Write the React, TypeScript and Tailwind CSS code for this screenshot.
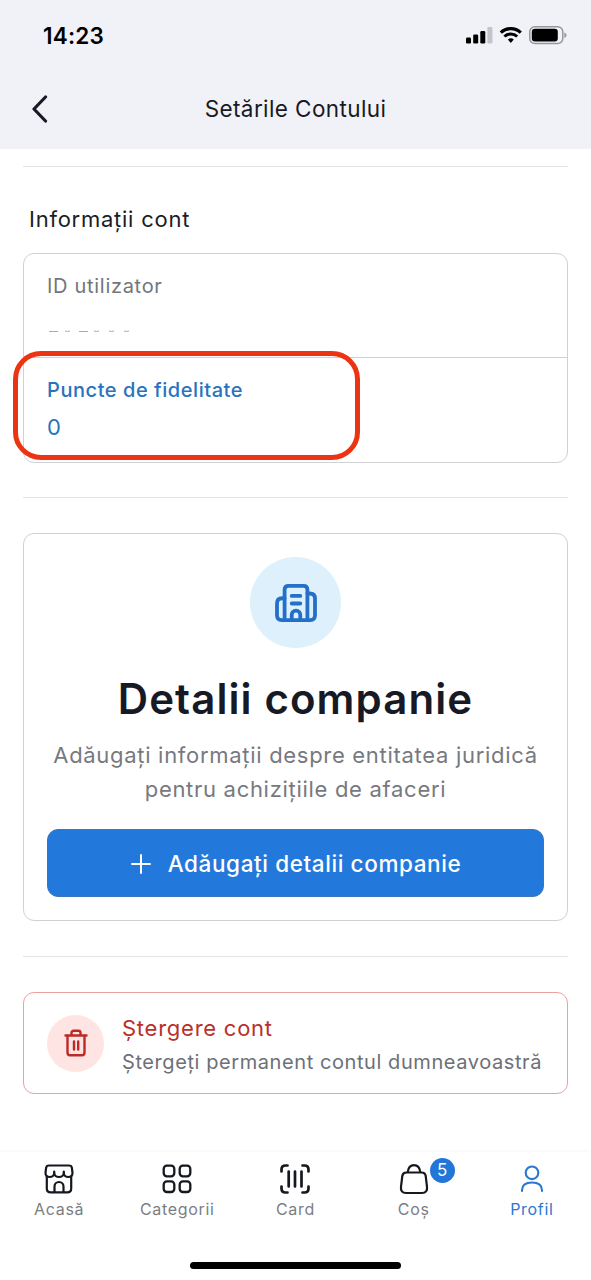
import type { ReactNode } from "react"

type TabInfo = {
    label: string,
    icon: ReactNode,
    active?: boolean,
    badge?: number,
}

const StatusBar = () => (
    <div className="flex h-[71px] items-center justify-between pl-[43px] pr-[24px]">
        <span className="text-[22.5px] leading-7 font-semibold tracking-[0.2px] text-black">14:23</span>
        <svg className="mb-[2px]" width="102" height="22" viewBox="0 0 102 22" fill="none">
            {/* Signal */}
            <rect x="1" y="13.5" width="5" height="6" rx="1.3" fill="#000" />
            <rect x="8.2" y="10.5" width="5" height="9" rx="1.3" fill="#000" />
            <rect x="15.3" y="7" width="5" height="12.5" rx="1.3" fill="#000" />
            <rect x="22.4" y="3" width="5" height="16.5" rx="1.3" fill="#c3c4c9" />
            {/* Wifi */}
            <path d="M35.8 8.6a14.5 14.5 0 0 1 20 0" stroke="#000" strokeWidth="3.2" />
            <path d="M39.4 12.5a9.2 9.2 0 0 1 12.8 0" stroke="#000" strokeWidth="3" />
            <path d="M42.8 15.6a4.6 4.6 0 0 1 6 0l-3 3.4z" fill="#000" />
            {/* Battery */}
            <rect x="64.8" y="2.8" width="33" height="16.6" rx="5" stroke="#96969b" strokeWidth="1.5" />
            <rect x="66.8" y="4.8" width="26" height="12.6" rx="3.2" fill="#000" />
            <path d="M99.4 8.6v5.4c1.3-.4 2.1-1.5 2.1-2.7s-.8-2.3-2.1-2.7z" fill="#96969b" />
        </svg>
    </div>
)

const Divider = () => <div className="h-px bg-[#e4e4e7]" />

const StoreIcon = () => (
    <svg width="30" height="30" viewBox="0 0 30 30" fill="none" stroke="#16181f" strokeWidth="2.2" strokeLinecap="round" strokeLinejoin="round">
        <path d="M5 1.5h20c1.600 0 2.700 1 2.900 2.400l.6 5.100c0 2.300-1.700 4-4.200 4s-4.500-1.700-4.500-4c0 2.300-2.200 4-4.800 4s-4.800-1.700-4.800-4c0 2.300-2 4-4.500 4s-4.200-1.700-4.200-4l.6-5.100C2.300 2.500 3.400 1.500 5 1.500z" />
        <path d="M10.200 7.500V9M19.800 7.500V9" />
        <path d="M2.800 12.500v12c0 2.400 1.400 3.900 3.900 3.900h16.600c2.500 0 3.900-1.500 3.900-3.900v-12" />
        <path d="M10.500 28v-5.500a4.500 4.500 0 0 1 9 0V28" />
    </svg>
)

const GridIcon = () => (
    <svg width="30" height="30" viewBox="0 0 30 30" fill="none" stroke="#16181f" strokeWidth="2.3">
        <rect x="1.7" y="1.7" width="10.6" height="10.6" rx="3.2" />
        <rect x="17.7" y="1.7" width="10.6" height="10.6" rx="3.2" />
        <rect x="1.7" y="17.4" width="10.6" height="10.6" rx="3.2" />
        <rect x="17.7" y="17.4" width="10.6" height="10.6" rx="3.2" />
    </svg>
)

const CardIcon = () => (
    <svg width="30" height="30" viewBox="0 0 30 30" fill="none" stroke="#16181f" strokeWidth="2.7" strokeLinecap="round">
        <path d="M1.5 7.500V5.500c0-2.400 1.600-4 4-4h2M22.500 1.500h2c2.400 0 4 1.600 4 4v2M28.500 22.500v2c0 2.400-1.600 4-4 4h-2M7.500 28.500h-2c-2.400 0-4-1.600-4-4v-2" />
        <path d="M8.700 7.500v15M15 7.500v15M21.500 7.500v15" />
    </svg>
)

const BagIcon = () => (
    <svg width="30" height="32" viewBox="0 0 30 32" fill="none" stroke="#16181f" strokeWidth="2.2">
        <path d="M7.500 9.500h15c2.500 0 3.900 1.300 4.200 3.500l1.300 10.800c.5 3.800-1.300 6.200-5 6.200H7c-3.700 0-5.500-2.400-5-6.200L3.300 13c.3-2.200 1.700-3.500 4.200-3.500z" />
        <path d="M8.700 9.200C9.200 5 11.500 2.200 15 2.200s5.800 2.800 6.300 7" />
    </svg>
)

const UserIcon = () => (
    <svg width="30" height="30" viewBox="0 0 30 30" fill="none" stroke="#2b78cf" strokeWidth="2.1" strokeLinecap="round">
        <circle cx="15" cy="8.8" r="6.3" />
        <path d="M5 27v-.8C5 21.500 8.500 18.500 15 18.500s10 3 10 7.700v.8" />
    </svg>
)

const tabs: TabInfo[] = [
    { label: "Acasă", icon: <StoreIcon /> },
    { label: "Categorii", icon: <GridIcon /> },
    { label: "Card", icon: <CardIcon /> },
    { label: "Coș", icon: <BagIcon />, badge: 5 },
    { label: "Profil", icon: <UserIcon />, active: true },
]

const TabBar = () => (
    <nav className="mt-auto h-[128px] bg-white shadow-[0_-1px_3px_rgba(0,0,0,0.03)]">
        <div className="grid h-[110px] grid-cols-5">
            {tabs.map((tab) => (
                <div key={tab.label} className="flex flex-col items-center pt-[11px]">
                    <div className="relative flex h-[32px] items-center">
                        {tab.icon}
                        {tab.badge && (
                            <span className="absolute -top-[5px] left-[31px] flex size-[25px] items-center justify-center rounded-full bg-[#2276d8] text-[17px] text-white">
                                {tab.badge}
                            </span>
                        )}
                    </div>
                    <span className={`mt-[3px] text-[16px] leading-[22px] tracking-[0.7px] ${tab.active ? "text-[#2b78cf]" : "text-[#7b7d83]"}`}>
                        {tab.label}
                    </span>
                </div>
            ))}
        </div>
        <div className="mx-auto h-[7px] w-[211px] rounded-full bg-black" />
    </nav>
)

const AccountInfo = () => (
    <section>
        <h2 className="ml-[6px] text-[22px] leading-7 tracking-[0.75px] text-[#1b1d24]">Informații cont</h2>
        <div className="relative mt-[20px] h-[210px] rounded-[11px] border border-[#d0d1d4]">
            <div className="h-[104px] border-b border-[#d0d1d4] px-[23px] pt-[18px]">
                <p className="text-[20px] leading-7 tracking-[0.7px] text-[#73757c]">ID utilizator</p>
                {/* Hidden user id */}
                <svg className="mt-[30px]" width="88" height="3" viewBox="0 0 88 3" fill="none" stroke="#a9aaae">
                    <path d="M2 1.5h9M32 1.5h9" />
                    <path d="M18 1q2.500 1 5 0M47 1q2.500 1 5 0M62 1q2.500 1 5 0M77 1q2.500 1 5 0" />
                </svg>
            </div>
            <div className="px-[23px] pt-[18px] text-[#2873be]">
                <p className="text-[20px] leading-7 font-[460] tracking-[0.55px]">Puncte de fidelitate</p>
                <p className="mt-[9px] text-[22px] leading-7">0</p>
            </div>
            <div className="absolute top-[97px] -left-[11px] h-[109px] w-[347px] rounded-[28px] border-[5px] border-[#ea3413]" />
        </div>
    </section>
)

const CompanyDetails = () => (
    <section className="flex h-[388px] flex-col items-center rounded-[11px] border border-[#d0d1d4] px-[23px] pt-[23px]">
        <div className="flex size-[91px] items-center justify-center rounded-full bg-[#def0fc]">
            <svg width="42" height="38" viewBox="0 0 44 40" fill="none" stroke="#2470c8" strokeWidth="4" strokeLinecap="round" strokeLinejoin="round">
                <path d="M10 38V6c0-2.500 1.500-4 4-4h16c2.500 0 4 1.500 4 4v32" />
                <path d="M10 15H7.500C4 15 2 17 2 20.500V33c0 3.300 1.800 5 5 5h30c3.200 0 5-1.700 5-5V15.500C42 12 40 10 36.500 10H34" />
                <path d="M17.500 12.500h9M17.500 20.500h9M17.500 38v-5.500a4.500 4.500 0 0 1 9 0V38" />
            </svg>
        </div>
        <h1 className="mt-[25px] text-[42px] leading-[52px] font-[560] tracking-[1.1px] whitespace-nowrap text-[#171a25]">Detalii companie</h1>
        <p className="mt-[13px] text-center text-[22px] leading-[34px] tracking-[0.7px] whitespace-nowrap text-[#777980]">
            Adăugați informații despre entitatea juridică<br />pentru achizițiile de afaceri
        </p>
        <button className="mt-[23px] flex h-[68px] w-full items-center justify-center gap-[17px] rounded-[11px] border border-[#3a76bd] bg-[#2378dc] pl-px pt-px text-[22.5px] font-medium tracking-[0.6px] text-white">
            <svg width="20" height="20" viewBox="0 0 20 20" stroke="currentColor" strokeWidth="2" strokeLinecap="round">
                <path d="M10 1v18M1 10h18" />
            </svg>
            Adăugați detalii companie
        </button>
    </section>
)

const DeleteAccount = () => (
    <section className="flex h-[102px] items-center rounded-[11px] border border-[#eba29f] pl-[23px]">
        <div className="flex size-[57px] shrink-0 items-center justify-center rounded-full bg-[#fee4e3]">
            <svg width="24" height="28" viewBox="0 0 24 28" fill="none" stroke="#bd2a26" strokeWidth="2.4" strokeLinecap="round" strokeLinejoin="round">
                <path d="M1.500 6.500h21M7.500 6V4c0-1.400.8-2.200 2.200-2.200h4.600c1.400 0 2.200.8 2.200 2.200v2" />
                <path d="M3.500 7v16.500c0 1.700.9 2.700 2.600 2.700h11.800c1.700 0 2.600-1 2.600-2.700V7" />
                <path d="M10 12.500v8M14.200 12.500v8" />
            </svg>
        </div>
        <div className="ml-[18px] pt-[3px] whitespace-nowrap">
            <p className="text-[22px] leading-[34px] tracking-[0.75px] text-[#b8302b]">Ștergere cont</p>
            <p className="text-[20px] leading-[34px] tracking-[0.58px] text-[#6d7078]">Ștergeți permanent contul dumneavoastră</p>
        </div>
    </section>
)

export default function App() {
    return (
        <div className="flex h-[1280px] w-[591px] flex-col overflow-hidden bg-white font-['Inter',sans-serif]">
            <header className="h-[149px] bg-[#f1f2f7]">
                <StatusBar />
                <div className="grid h-[75px] grid-cols-[80px_1fr_80px] items-center">
                    <svg className="ml-[31px]" width="18" height="28" viewBox="0 0 18 28" fill="none" stroke="#171a25" strokeWidth="3.2" strokeLinecap="round" strokeLinejoin="round">
                        <path d="M14.500 2L3 14l11.500 12" />
                    </svg>
                    <h1 className="text-center text-[22.5px] leading-7 font-[430] tracking-[0.4px] text-[#171a25]">Setările Contului</h1>
                </div>
            </header>
            <main className="flex flex-col px-[23px] pt-[17px]">
                <Divider />
                <div className="h-[38px]" />
                <AccountInfo />
                <div className="h-[34px]" />
                <Divider />
                <div className="h-[35px]" />
                <CompanyDetails />
                <div className="h-[35px]" />
                <Divider />
                <div className="h-[35px]" />
                <DeleteAccount />
            </main>
            <TabBar />
        </div>
    )
}
